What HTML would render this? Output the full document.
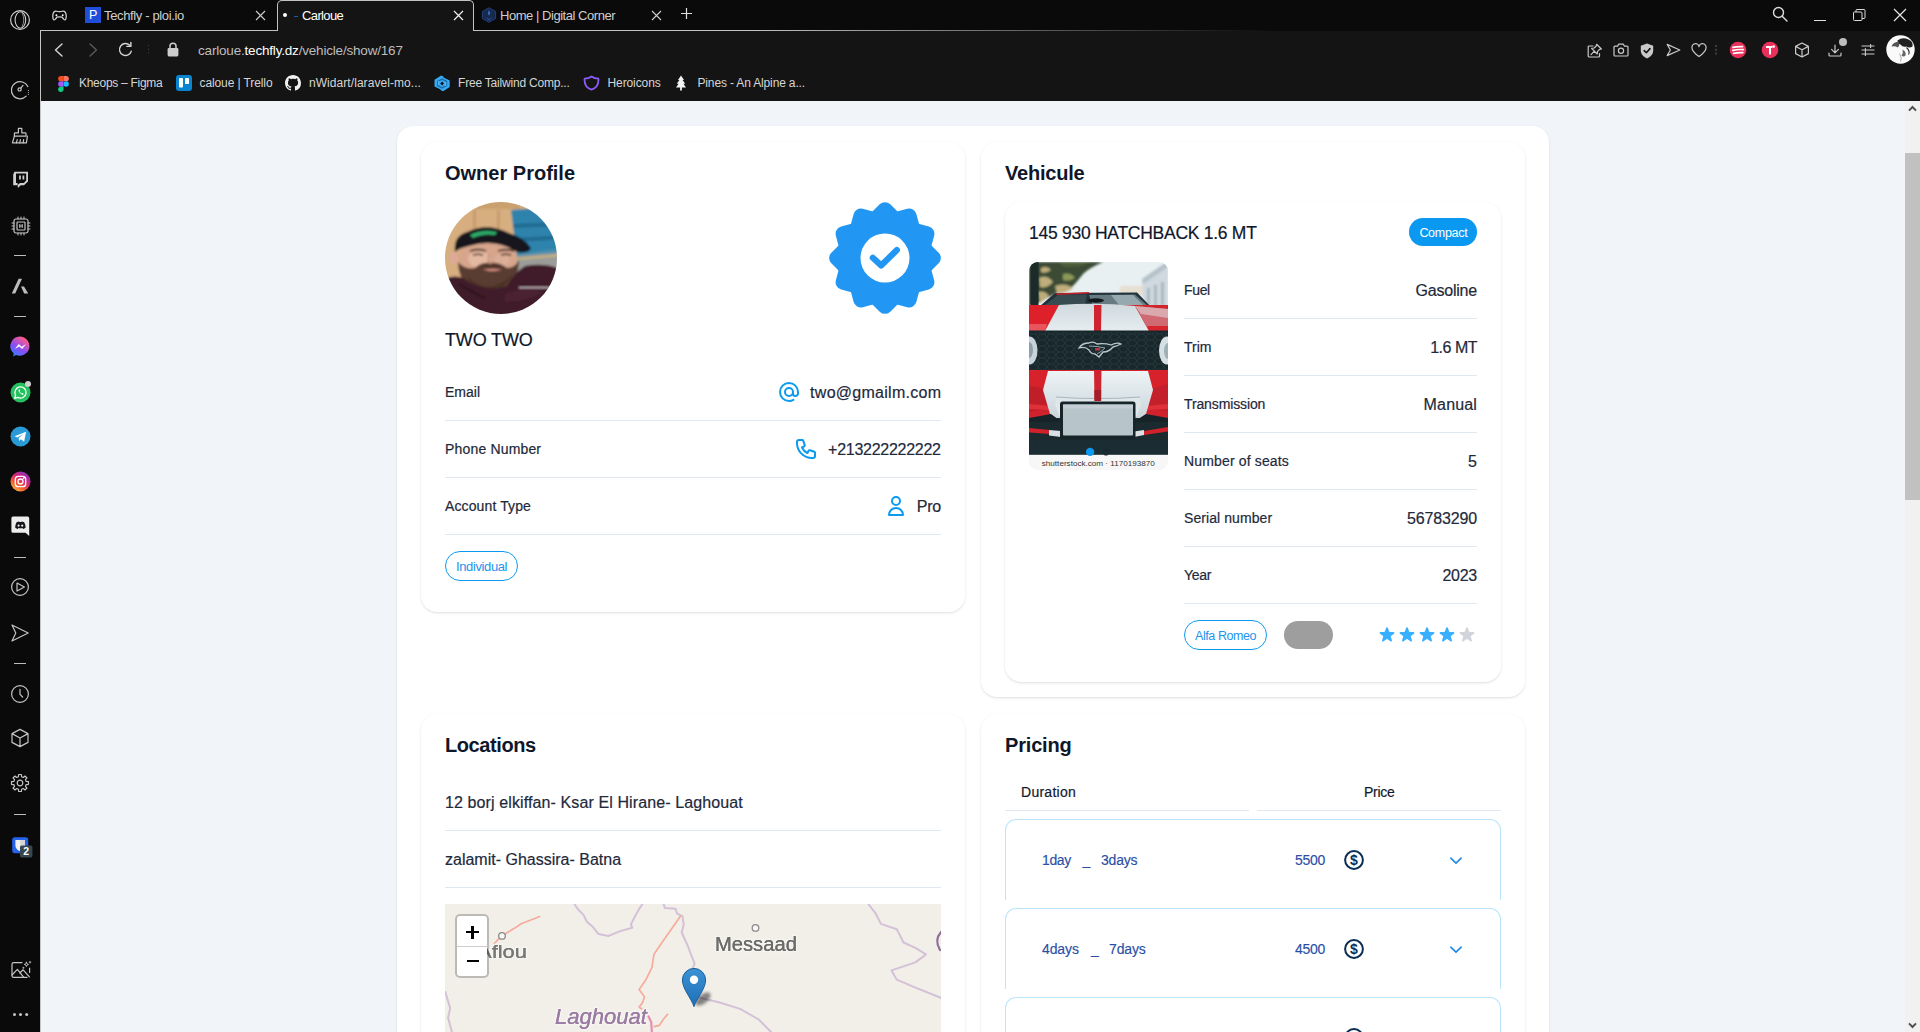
<!DOCTYPE html>
<html>
<head>
<meta charset="utf-8">
<title>Carloue</title>
<style>
*{box-sizing:border-box;margin:0;padding:0}
html,body{width:1920px;height:1032px;overflow:hidden;background:#0a0a0a;font-family:"Liberation Sans",sans-serif;}
.abs{position:absolute}
.t{position:absolute;white-space:nowrap;line-height:1}
#chrome{position:absolute;left:0;top:0;width:1920px;height:1032px;}
#toolbar{position:absolute;left:41px;top:31px;width:1879px;height:70px;background:#141414}
#page{position:absolute;left:41px;top:101px;width:1864px;height:931px;background:#f1f5f9;overflow:hidden}
#pin{position:absolute;left:-41px;top:-101px;width:1920px;height:1032px}
#sb{position:absolute;left:1905px;top:101px;width:15px;height:931px;background:#f1f1f1}
#sb .thumb{position:absolute;left:0;top:52px;width:15px;height:347px;background:#c1c1c1}
.card{position:absolute;background:#fff;border-radius:16px;box-shadow:0 1px 3px rgba(0,0,0,.1),0 1px 2px -1px rgba(0,0,0,.1)}
.h{font-weight:700;font-size:20px;color:#0f172a}
.lbl{font-size:14px;color:#1e293b;-webkit-text-stroke:.2px #1e293b}
.val{font-size:16px;color:#1e293b;-webkit-text-stroke:.2px #1e293b}
.hr{position:absolute;height:1px;background:#e2e8f0}
.pr{font-size:14px;color:#2c4fa6;-webkit-text-stroke:.15px #2c4fa6}
.bm{font-size:12px;color:#d6d6d6}
</style>
</head>
<body>
<div id="chrome">
<!-- SIDEBAR -->
<div id="sidebar" class="abs" style="left:0;top:0;width:40px;height:1032px;background:#0a0a0a">
<div class="abs" style="left:40px;top:30px;width:1px;height:1002px;background:#c6c6c6"></div>
<svg class="abs" style="left:9.0px;top:9.3px" width="22" height="22" viewBox="-11.0 -11.0 22 22" fill="none" stroke="#c4c4c4" stroke-width="1.2" stroke-linecap="round" stroke-linejoin="round"><circle r="9.4" stroke="#cdcdcd" stroke-width="1.2"/><ellipse cx=".4" rx="5.3" ry="8.2" stroke="#cdcdcd" stroke-width="1.1"/><path d="M2.4 -6.6 Q5.4 0 2.2 6.4" stroke="#9a9a9a" stroke-width=".9"/></svg>
<svg class="abs" style="left:9.600000000000001px;top:79.7px" width="20" height="20" viewBox="-10.0 -10.0 20 20" fill="none" stroke="#c4c4c4" stroke-width="1.2" stroke-linecap="round" stroke-linejoin="round"><path d="M6.2 6.2 A8.6 8.6 0 1 1 7.8 -3.4"/><circle cx="-.4" cy="-.6" r="1.6"/><path d="M.8 -1.8 L3 -4.6"/><path d="M8.4 .4 v.1 M8.4 2.4 v.1 M8.4 4.4 v.1" stroke-width="1"/></svg>
<svg class="abs" style="left:11.0px;top:126.6px" width="18" height="18" viewBox="-9.0 -9.0 18 18" fill="none" stroke="#c4c4c4" stroke-width="1.2" stroke-linecap="round" stroke-linejoin="round"><path d="M-1.6 -7.6 H1.8 V-3.2 H5.2 a.8 .8 0 0 1 .8 .8 V.2 H-5.6 V-2.4 a.8 .8 0 0 1 .8 -.8 H-1.6Z"/><path d="M-5.6 .2 L-7.6 6.8 H6.4 L7.4 .2"/><path d="M-3.6 6.8 L-2.8 3.6 M-.2 6.8 L.4 3.6 M3.2 6.8 L3.6 3.6"/></svg>
<svg class="abs" style="left:11.5px;top:171px" width="17" height="18" viewBox="0 0 17 18"><path d="M2.4 .8 H16 V10.4 L12 14.2 H8.8 L5.8 17 V14.2 H1.2 V3.6Z" fill="#cfcfcf"/><path d="M4 2.6 H14.2 V9.6 L11.8 12 H8 L5.6 14 V12 H4Z" fill="#0a0a0a"/><path d="M8 4.6 V8.4 M11.4 4.6 V8.4" stroke="#cfcfcf" stroke-width="1.7"/></svg>
<svg class="abs" style="left:11.0px;top:216.2px" width="20" height="20" viewBox="-10.0 -10.0 20 20" fill="none" stroke="#c4c4c4" stroke-width="1.2" stroke-linecap="round" stroke-linejoin="round"><rect x="-7" y="-7" width="14" height="14" rx="2"/><rect x="-4" y="-4" width="8" height="8" rx=".8"/><path d="M-1.2 -1.6 V1.6 M1.2 -1.6 V1.6 M-1.2 0 H1.2" stroke-width="1"/><path d="M-3 -7 V-9 M0 -7 V-9 M3 -7 V-9 M-3 7 V9 M0 7 V9 M3 7 V9 M-7 -3 H-9 M-7 0 H-9 M-7 3 H-9 M7 -3 H9 M7 0 H9 M7 3 H9" stroke-width="1"/></svg>
<div class="abs" style="left:14.5px;top:254.7px;width:11.8px;height:1px;background:#bdbdbd;margin-left:-.3px"></div>
<svg class="abs" style="left:11px;top:278px" width="18" height="17" viewBox="0 0 18 17"><path d="M7.6 .8 H11 L4.2 15.6 H.8Z" fill="#bdbdbd"/><path d="M10 8.4 L13 8.4 L17.2 15.6 H13.2Z" fill="#bdbdbd"/></svg>
<div class="abs" style="left:14.5px;top:315.9px;width:11.8px;height:1px;background:#bdbdbd;margin-left:-.3px"></div>
<svg class="abs" style="left:9.5px;top:336px" width="21" height="21" viewBox="-10.5 -10.5 21 21"><defs><linearGradient id="msg" x1="0" y1="1" x2=".6" y2="0"><stop offset="0" stop-color="#1e8cff"/><stop offset=".5" stop-color="#8a4cf5"/><stop offset="1" stop-color="#ff5c87"/></linearGradient></defs><path d="M0 -10 A10 9.6 0 1 1 -4.4 8.6 L-7.4 10 L-6.8 6.8 A9.6 9.6 0 0 1 0 -10Z" fill="url(#msg)"/><path d="M-5.6 2.6 L-1.8 -2.4 L1.2 .2 L5.6 -2.4 L1.8 2.6 L-1.2 0Z" fill="#fff"/></svg>
<svg class="abs" style="left:9.5px;top:382px" width="21" height="21" viewBox="-10.5 -10.5 21 21"><circle r="10" fill="#25c15e"/><path d="M-5.8 5.8 L-4.9 2.6 A5.6 5.6 0 1 1 -2.6 4.9Z" fill="none" stroke="#fff" stroke-width="1.3" stroke-linejoin="round"/><path d="M-2.2 -2.6 Q-1.6 .6 2.4 2.4 L3.2 1.2 L1.8 .4 L1.2 1 Q-.4 .2 -.9 -1.2 L-.3 -1.8 L-1 -3.2Z" fill="#fff"/></svg>
<div class="abs" style="left:24.6px;top:380.8px;width:6.4px;height:6.4px;border-radius:4px;background:#cfcfcf"></div>
<svg class="abs" style="left:9.5px;top:426px" width="21" height="21" viewBox="-10.5 -10.5 21 21"><circle r="10" fill="#2a9ad6"/><path d="M-6 -.2 L5.6 -4.8 L3.6 5.2 L.4 2.8 L-1.4 4.6 L-1.8 1.6 L3.2 -2.8 L-3 .9Z" fill="#fff"/></svg>
<svg class="abs" style="left:9.5px;top:471px" width="21" height="21" viewBox="-10.5 -10.5 21 21"><defs><linearGradient id="ig" x1=".15" y1="1" x2=".85" y2="0"><stop offset="0" stop-color="#fdc94f"/><stop offset=".3" stop-color="#f4622c"/><stop offset=".6" stop-color="#d6247c"/><stop offset="1" stop-color="#7c36c8"/></linearGradient></defs><circle r="10" fill="url(#ig)"/><rect x="-5.2" y="-5.2" width="10.4" height="10.4" rx="3" fill="none" stroke="#fff" stroke-width="1.3"/><circle r="2.5" fill="none" stroke="#fff" stroke-width="1.3"/><circle cx="3.1" cy="-3.1" r=".8" fill="#fff"/></svg>
<svg class="abs" style="left:10.5px;top:516px" width="20" height="21" viewBox="0 0 20 21"><path d="M2 .6 H16.6 a1.6 1.6 0 0 1 1.6 1.6 V20 L14.6 16.8 H2 a1.6 1.6 0 0 1 -1.6 -1.6 V2.2 A1.6 1.6 0 0 1 2 .6Z" fill="#ececec"/><path d="M5.6 6.2 Q7.2 5.4 8 5.4 L8.4 6 H10.4 L10.8 5.4 Q11.6 5.4 13.2 6.2 Q14.8 9 14.6 11.8 Q13.4 12.8 12 13 L11.4 12 Q9.4 12.6 7.4 12 L6.8 13 Q5.4 12.8 4.2 11.8 Q4 9 5.6 6.2Z" fill="#15151a"/><ellipse cx="7.6" cy="9.6" rx="1" ry="1.2" fill="#ececec"/><ellipse cx="11.2" cy="9.6" rx="1" ry="1.2" fill="#ececec"/></svg>
<div class="abs" style="left:14.5px;top:556.8px;width:11.8px;height:1px;background:#bdbdbd;margin-left:-.3px"></div>
<svg class="abs" style="left:9.600000000000001px;top:577.2px" width="20" height="20" viewBox="-10.0 -10.0 20 20" fill="none" stroke="#c4c4c4" stroke-width="1.2" stroke-linecap="round" stroke-linejoin="round"><circle r="8.4"/><path d="M-3 -4 L4.4 0 L-3 4Z"/></svg>
<svg class="abs" style="left:9.600000000000001px;top:623.0px" width="20" height="20" viewBox="-10.0 -10.0 20 20" fill="none" stroke="#c4c4c4" stroke-width="1.2" stroke-linecap="round" stroke-linejoin="round"><path d="M-8 -8 L8.2 0 L-8 8 L-4.2 0Z"/></svg>
<div class="abs" style="left:14.5px;top:662.8px;width:11.8px;height:1px;background:#bdbdbd;margin-left:-.3px"></div>
<svg class="abs" style="left:9.600000000000001px;top:683.5px" width="20" height="20" viewBox="-10.0 -10.0 20 20" fill="none" stroke="#c4c4c4" stroke-width="1.2" stroke-linecap="round" stroke-linejoin="round"><circle r="8.4"/><path d="M0 -4.6 V.4 L2.6 3"/></svg>
<svg class="abs" style="left:9.600000000000001px;top:728.1px" width="20" height="20" viewBox="-10.0 -10.0 20 20" fill="none" stroke="#c4c4c4" stroke-width="1.2" stroke-linecap="round" stroke-linejoin="round"><path d="M0 -8.6 L8 -4.4 V4.4 L0 8.6 L-8 4.4 V-4.4Z M-8 -4.4 L0 0 L8 -4.4 M0 0 V8.6"/></svg>
<svg class="abs" style="left:9.600000000000001px;top:773.4px" width="20" height="20" viewBox="-10.0 -10.0 20 20" fill="none" stroke="#c4c4c4" stroke-width="1.2" stroke-linecap="round" stroke-linejoin="round"><path d="M8.49 -1.37 L8.49 1.37 L6.2 1.58 L5.5 3.27 L6.97 5.03 L5.03 6.97 L3.27 5.5 L1.58 6.2 L1.37 8.49 L-1.37 8.49 L-1.58 6.2 L-3.27 5.5 L-5.03 6.97 L-6.97 5.03 L-5.5 3.27 L-6.2 1.58 L-8.49 1.37 L-8.49 -1.37 L-6.2 -1.58 L-5.5 -3.27 L-6.97 -5.03 L-5.03 -6.97 L-3.27 -5.5 L-1.58 -6.2 L-1.37 -8.49 L1.37 -8.49 L1.58 -6.2 L3.27 -5.5 L5.03 -6.97 L6.97 -5.03 L5.5 -3.27 L6.2 -1.58Z"/><circle r="2.8"/></svg>
<div class="abs" style="left:14.5px;top:813.9px;width:11.8px;height:1px;background:#bdbdbd;margin-left:-.3px"></div>
<svg class="abs" style="left:12px;top:836.5px" width="21" height="21" viewBox="0 0 21 21"><rect x=".2" y=".2" width="16" height="16" rx="2.6" fill="#2563eb"/><path d="M3.4 3 H13 V8.4 C13 11.4 10.6 13.2 8.2 14.2 C5.8 13.2 3.4 11.4 3.4 8.4Z" fill="#f2f2f2"/><path d="M8.2 3 H13 V8.4 C13 11.4 10.6 13.2 8.2 14.2Z" fill="#d6d6d6"/><rect x="8" y="8.4" width="12.4" height="12" rx="1.6" fill="#37474f"/><text x="14.2" y="18.3" text-anchor="middle" font-family="Liberation Sans, sans-serif" font-weight="700" font-size="10.5" fill="#fff">2</text></svg>
<svg class="abs" style="left:9.600000000000001px;top:960.1px" width="22" height="20" viewBox="-11.0 -10.0 22 20" fill="none" stroke="#c4c4c4" stroke-width="1.2" stroke-linecap="round" stroke-linejoin="round"><path d="M1 -7.4 H-7.4 a1.6 1.6 0 0 0 -1.6 1.6 V5.8 a1.6 1.6 0 0 0 1.6 1.6 H6"/><path d="M-9 5 L-3.6 -.6 L2.6 7.2 M-1.2 3 L2.2 -.2 L8.4 6.8"/><path d="M8.6 -2 V2.4" /><path d="M5.4 -7.8 L6 -6.2 L7.6 -5.6 L6 -5 L5.4 -3.4 L4.8 -5 L3.2 -5.6 L4.8 -6.2Z" stroke-width=".9"/><path d="M9 -8.6 v1.6 M8.2 -7.8 h1.6 M2.4 -2.8 v1.2 M1.8 -2.2 h1.2" stroke-width=".8"/></svg>
<div class="abs" style="left:12.7px;top:1012.6px;width:3.4px;height:3.4px;border-radius:2px;background:#c4c4c4;box-shadow:6px 0 0 #c4c4c4,12.2px 0 0 #c4c4c4"></div>
</div>
<!-- TABBAR -->
<div id="tabbar" class="abs" style="left:40px;top:0;width:1880px;height:31px;background:#0a0a0a">
  <!-- frame line under tabs -->
  <div class="abs" style="left:0;top:30px;width:238px;height:1px;background:#c2c2c2"></div>
  <div class="abs" style="left:433px;top:30px;width:800px;height:1px;background:linear-gradient(90deg,#c2c2c2 0,#c2c2c2 35%,rgba(194,194,194,0) 100%)"></div>
  <!-- active tab -->
  <div class="abs" style="left:237px;top:0;width:197px;height:32px;background:#141414;border:1px solid #c2c2c2;border-bottom:none;border-radius:5px 5px 0 0"></div>
  <!-- gamepad -->
  <svg class="abs" style="left:11.5px;top:9.6px" width="15" height="11" viewBox="-.5 0 15 11" fill="none" stroke="#d4d4d4" stroke-width="1.25" stroke-linejoin="round"><path d="M3.2 1 Q7 2.2 10.8 1 C13 1 14 4 13.6 8 C13.4 10.2 11.8 10.2 11 9 L9.6 7.2 Q7 6.4 4.4 7.2 L3 9 C2.2 10.2 .6 10.2 .4 8 C0 4 1 1 3.2 1Z"/><circle cx="3.9" cy="5.2" r=".95" fill="#fff" stroke="none"/><circle cx="10.2" cy="5.2" r=".95" fill="#fff" stroke="none"/></svg>
  <!-- tab1 -->
  <div class="abs" style="left:45px;top:7px;width:16px;height:16px;background:#1f4fd8"></div>
  <div class="t" style="left:49px;top:9px;font-size:12.5px;color:#fff;font-weight:400">P</div>
  <div class="t" id="t_tab1" style="left:64px;top:9px;font-size:13px;color:#cfcfcf;letter-spacing:-.36px">Techfly - ploi.io</div>
  <svg class="abs" style="left:215px;top:10px" width="11" height="11" viewBox="0 0 11 11"><path d="M1 1 L10 10 M10 1 L1 10" stroke="#cfcfcf" stroke-width="1.1"/></svg>
  <!-- tab2 active -->
  <div class="abs" style="left:243px;top:13px;width:4px;height:4px;border-radius:2px;background:#fff"></div>
  <div class="abs" style="left:254px;top:15.5px;width:4px;height:1px;background:#1d5fa8"></div>
  <div class="t" id="t_tab2" style="left:262px;top:9px;font-size:13px;color:#fff;letter-spacing:-.62px">Carloue</div>
  <svg class="abs" style="left:413px;top:10px" width="11" height="11" viewBox="0 0 11 11"><path d="M1 1 L10 10 M10 1 L1 10" stroke="#f0f0f0" stroke-width="1.2"/></svg>
  <!-- tab3 -->
  <svg class="abs" style="left:441px;top:7px" width="16" height="16" viewBox="0 0 16 16"><path d="M8 .8 L14.6 4.4 V11.6 L8 15.2 L1.4 11.6 V4.4Z" fill="#16294f" stroke="#22407c" stroke-width="1"/><path d="M8 3.5 C6.5 5 6.3 7 8 8.5 C9.7 7 9.5 5 8 3.5Z" fill="#3b68b8"/><path d="M4 10 L8 12 L12 10 L8 13.5Z" fill="#2a4f96"/></svg>
  <div class="t" id="t_tab3" style="left:460px;top:9px;font-size:13px;color:#cfcfcf;letter-spacing:-.46px">Home | Digital Corner</div>
  <svg class="abs" style="left:611px;top:10px" width="11" height="11" viewBox="0 0 11 11"><path d="M1 1 L10 10 M10 1 L1 10" stroke="#cfcfcf" stroke-width="1.1"/></svg>
  <svg class="abs" style="left:640px;top:7px" width="13" height="13" viewBox="0 0 13 13"><path d="M6.5 1 V12 M1 6.5 H12" stroke="#e0e0e0" stroke-width="1.2"/></svg>
  <!-- window controls -->
  <svg class="abs" style="left:1731px;top:5px" width="18" height="18" viewBox="0 0 18 18" fill="none" stroke="#dcdcdc" stroke-width="1.4"><circle cx="7.5" cy="7.5" r="5"/><path d="M11.2 11.2 L16 16" stroke-linecap="round"/></svg>
  <div class="abs" style="left:1774px;top:20px;width:12px;height:1px;background:#dcdcdc"></div>
  <svg class="abs" style="left:1813px;top:9px" width="13" height="13" viewBox="0 0 13 13" fill="none" stroke="#dcdcdc" stroke-width="1"><rect x=".5" y="3" width="8.5" height="8.5" rx="1"/><path d="M3 3 V1.5 a1 1 0 0 1 1 -1 H11 a1 1 0 0 1 1 1 V8.5 a1 1 0 0 1 -1 1 H9"/></svg>
  <svg class="abs" style="left:1853px;top:8px" width="14" height="14" viewBox="0 0 14 14"><path d="M1 1 L13 13 M13 1 L1 13" stroke="#e6e6e6" stroke-width="1.2"/></svg>
</div>
<!-- TOOLBAR -->
<div id="toolbar">
<svg class="abs" style="left:13px;top:12px" width="10" height="14" viewBox="0 0 10 14" fill="none" stroke="#c9c9c9" stroke-width="1.2" stroke-linecap="round" stroke-linejoin="round" ><path d="M8 1 L1.5 7 L8 13" stroke="#d6d6d6" stroke-width="1.4"/></svg>
<svg class="abs" style="left:47px;top:12px" width="10" height="14" viewBox="0 0 10 14" fill="none" stroke="#c9c9c9" stroke-width="1.2" stroke-linecap="round" stroke-linejoin="round" ><path d="M2 1 L8.5 7 L2 13" stroke="#5a5a5a" stroke-width="1.4"/></svg>
<svg class="abs" style="left:76px;top:10px" width="17" height="17" viewBox="0 0 17 17" fill="none" stroke="#c9c9c9" stroke-width="1.2" stroke-linecap="round" stroke-linejoin="round" ><path d="M14.3 10.1 A6 6 0 1 1 12.7 4.2" stroke="#d6d6d6" stroke-width="1.4"/><path d="M13.9 1.4 V5.4 H9.9" stroke="#d6d6d6" stroke-width="1.4" fill="none"/></svg>
<div class="abs" style="left:106.5px;top:14px;width:1.4px;height:1.4px;background:#444;box-shadow:0 3.6px 0 #444,0 7.2px 0 #444"></div>
<svg class="abs" style="left:126px;top:11px" width="12" height="15" viewBox="0 0 12 15"><rect x=".6" y="6" width="10.8" height="8.4" rx="1.3" fill="#cdcdcd"/><path d="M3 6.2 V4.2 a3 3 0 0 1 6 0 V6.2" fill="none" stroke="#cdcdcd" stroke-width="1.5"/></svg>
<div class="t" id="t_url" style="left:157px;top:12.5px;font-size:13.5px;color:#bdbdbd;letter-spacing:-0.19px">carloue.<span style="color:#fff">techfly.dz</span>/vehicle/show/167</div>
<svg class="abs" style="left:1546.0px;top:11.5px" width="16" height="15" viewBox="0 0 16 15" fill="none" stroke="#c9c9c9" stroke-width="1.2" stroke-linecap="round" stroke-linejoin="round" ><path d="M6 3 H2.2 a1 1 0 0 0 -1 1 V13 a1 1 0 0 0 1 1 H11.5 a1 1 0 0 0 1 -1 V10.5"/><path d="M9.6 1.3 L14.4 6 L12.6 6.4 L10.6 8.4 L10.2 11 L4.6 5.4 L7.2 5 L9.2 3Z M7.4 8.2 L4 11.6"/></svg>
<svg class="abs" style="left:1572.0px;top:11.5px" width="16" height="14" viewBox="0 0 16 14" fill="none" stroke="#c9c9c9" stroke-width="1.2" stroke-linecap="round" stroke-linejoin="round" ><path d="M1 4.2 a1 1 0 0 1 1 -1 H4.6 L5.6 1.2 H10.4 L11.4 3.2 H14 a1 1 0 0 1 1 1 V12 a1 1 0 0 1 -1 1 H2 a1 1 0 0 1 -1 -1Z"/><circle cx="8" cy="7.8" r="2.6"/></svg>
<svg class="abs" style="left:1599.0px;top:11.5px" width="14" height="16" viewBox="0 0 14 16"><path d="M7 .6 L13.2 2.8 V7.6 C13.2 11.4 10.6 14 7 15.4 C3.4 14 .8 11.4 .8 7.6 V2.8Z" fill="#c9c9c9"/><path d="M4.2 7.6 L6.3 9.7 L10 5.6" fill="none" stroke="#141414" stroke-width="1.6" stroke-linecap="round" stroke-linejoin="round"/></svg>
<svg class="abs" style="left:1625.0px;top:12px" width="15" height="14" viewBox="0 0 15 14" fill="none" stroke="#c9c9c9" stroke-width="1.2" stroke-linecap="round" stroke-linejoin="round" ><path d="M1.2 1.4 L13.8 7 L1.2 12.6 L4.4 7Z"/></svg>
<svg class="abs" style="left:1650.0px;top:12px" width="16" height="15" viewBox="0 0 16 15" fill="none" stroke="#c9c9c9" stroke-width="1.2" stroke-linecap="round" stroke-linejoin="round" ><path d="M8 13.6 C3 9.8 1 7.4 1 4.9 A3.4 3.4 0 0 1 8 3.6 A3.4 3.4 0 0 1 15 4.9 C15 7.4 13 9.8 8 13.6Z"/></svg>
<div class="abs" style="left:1674.3px;top:14.399999999999999px;width:1.4px;height:1.4px;background:#3c3c3c;box-shadow:0 3.8px 0 #3c3c3c,0 7.6px 0 #3c3c3c"></div>
<svg class="abs" style="left:1687.7px;top:9.700000000000003px" width="18" height="18" viewBox="-9 -9 18 18"><circle r="8.3" fill="#e8305a"/><path d="M-5 -2.6 Q-1 -3.6 4.6 -3.4 M-5.2 .4 Q0 -.8 5.4 -.4 M-4.4 3.4 Q0 2.4 4.8 2.6" stroke="#fff" stroke-width="1.7" fill="none" stroke-linecap="round"/></svg>
<svg class="abs" style="left:1720px;top:9.700000000000003px" width="18" height="18" viewBox="-9 -9 18 18"><circle r="8.3" fill="#e8305a"/><path d="M-4 -3 H2.4 M0 -3 V4.6" stroke="#fff" stroke-width="2" fill="none"/><circle cx="3.6" cy="-3.4" r="1.3" fill="#fff"/></svg>
<svg class="abs" style="left:1752.5px;top:11px" width="16" height="16" viewBox="0 0 16 16" fill="none" stroke="#c9c9c9" stroke-width="1.2" stroke-linecap="round" stroke-linejoin="round" ><path d="M8 1 L14.4 4.4 V11.6 L8 15 L1.6 11.6 V4.4Z M1.6 4.4 L8 7.8 L14.4 4.4 M8 7.8 V15"/></svg>
<svg class="abs" style="left:1786.6px;top:13px" width="14" height="13" viewBox="0 0 14 13" fill="none" stroke="#c9c9c9" stroke-width="1.2" stroke-linecap="round" stroke-linejoin="round" ><path d="M7 1 V8.6 M3.6 5.4 L7 8.8 L10.4 5.4 M1 9 V11 a1 1 0 0 0 1 1 H12 a1 1 0 0 0 1 -1 V9"/></svg>
<div class="abs" style="left:1797.9px;top:7px;width:8px;height:8px;border-radius:4px;background:#bdbdbd"></div>
<svg class="abs" style="left:1819.8px;top:13px" width="14" height="12" viewBox="0 0 14 12" fill="none" stroke="#c9c9c9" stroke-width="1.2" stroke-linecap="round" stroke-linejoin="round" ><path d="M1 2 H13 M1 6 H13 M1 10 H13 M9.6 .6 V3.4 M4.4 4.6 V7.4 M4.4 8.6 V11.4"/></svg>
<svg class="abs" style="left:1845.3px;top:4.200000000000003px" width="29" height="29" viewBox="-14.5 -14.5 29 29"><defs><clipPath id="pav"><circle r="14.2"/></clipPath></defs><circle r="14.2" fill="#fafafa"/><g clip-path="url(#pav)"><path d="M-3 -9 Q2 -13 8 -10 Q13 -8 12 -3 Q9 -1 6 -3 Q2 -2 0 -5 Q-3 -6 -3 -9Z" fill="#222"/><path d="M-2 -8 Q-8 -7 -9 -3 Q-5 -4 -3 -2 Q0 -4 -2 -8Z" fill="#555"/><path d="M2 0 Q6 2 5 6 Q3 8 1 6 Q3 3 2 0Z" fill="#666"/><path d="M6 -2 Q10 2 8 5" stroke="#333" stroke-width="1.2" fill="none"/><path d="M-1 4 Q2 9 0 12" stroke="#999" stroke-width=".8" fill="none"/></g></svg>
<svg class="abs" style="left:16.5px;top:44.5px" width="11" height="16" viewBox="0 0 10 15"><path d="M2.5 0 H5 V5 H2.5 a2.5 2.5 0 0 1 0 -5Z" fill="#f24e1e"/><path d="M5 0 H7.5 a2.5 2.5 0 0 1 0 5 H5Z" fill="#ff7262"/><path d="M2.5 5 H5 V10 H2.5 a2.5 2.5 0 0 1 0 -5Z" fill="#a259ff"/><circle cx="7.5" cy="7.5" r="2.5" fill="#1abcfe"/><path d="M2.5 10 H5 V12.5 a2.5 2.5 0 1 1 -2.5 -2.5Z" fill="#0acf83"/></svg>
<div class="t bm" id="t_b1" style="left:38px;top:45.5px;letter-spacing:-0.28px">Kheops – Figma</div>
<svg class="abs" style="left:135px;top:44px" width="16" height="16" viewBox="0 0 16 16"><rect width="16" height="16" rx="3" fill="#0a84d0"/><rect x="3" y="3" width="4" height="9.5" rx=".8" fill="#fff"/><rect x="9" y="3" width="4" height="6" rx=".8" fill="#fff"/></svg>
<div class="t bm" id="t_b2" style="left:158.5px;top:45.5px;letter-spacing:-0.1px">caloue | Trello</div>
<svg class="abs" style="left:244px;top:44px" width="16" height="16" viewBox="0 0 16 16"><path fill="#f2f2f2" d="M8 0C3.58 0 0 3.58 0 8c0 3.54 2.29 6.53 5.47 7.59.4.07.55-.17.55-.38 0-.19-.01-.82-.01-1.49-2.01.37-2.53-.49-2.69-.94-.09-.23-.48-.94-.82-1.13-.28-.15-.68-.52-.01-.53.63-.01 1.08.58 1.23.82.72 1.21 1.87.87 2.33.66.07-.52.28-.87.51-1.07-1.78-.2-3.64-.89-3.64-3.95 0-.87.31-1.59.82-2.15-.08-.2-.36-1.02.08-2.12 0 0 .67-.21 2.2.82.64-.18 1.32-.27 2-.27.68 0 1.36.09 2 .27 1.53-1.04 2.2-.82 2.2-.82.44 1.1.16 1.92.08 2.12.51.56.82 1.27.82 2.15 0 3.07-1.87 3.75-3.65 3.95.29.25.54.73.54 1.48 0 1.07-.01 1.93-.01 2.2 0 .21.15.46.55.38A8.013 8.013 0 0016 8c0-4.42-3.58-8-8-8z"/></svg>
<div class="t bm" id="t_b3" style="left:268px;top:45.5px;letter-spacing:0.06px">nWidart/laravel-mo...</div>
<svg class="abs" style="left:392.2px;top:43.6px" width="18.4" height="17" viewBox="0 0 17 17" preserveAspectRatio="none"><path d="M7.6 .6 L9.6 1.6 L9.8 2.4 L15.4 5.4 V12 L9.4 16.2 L7.2 15.2 L7 14.4 L1.4 11.4 V4.8Z" fill="#37a9f7"/><path d="M8.4 4.2 L12.4 6.4 V10.6 L8.4 12.8 L4.4 10.6 V6.4Z" fill="none" stroke="#1f6ea6" stroke-width="1.5"/><path d="M8.4 6.6 L10.2 8.4 L8.4 10.4 L6.6 8.6Z" fill="#141414"/><path d="M5.2 6 L5.2 10 M11.6 7 V11" stroke="#46b6ff" stroke-width="1.2"/></svg>
<div class="t bm" id="t_b4" style="left:417px;top:45.5px;letter-spacing:-0.2px">Free Tailwind Comp...</div>
<svg class="abs" style="left:542px;top:44px" width="17" height="16" viewBox="0 0 17 16" fill="none"><path d="M8.5 1.5 C6.5 3 4 3.6 1.6 3.6 C1.2 8.6 3.4 12.8 8.5 14.6 C13.6 12.8 15.8 8.6 15.4 3.6 C13 3.6 10.5 3 8.5 1.5Z" stroke="#8b5cf6" stroke-width="1.8" stroke-linejoin="round"/></svg>
<div class="t bm" id="t_b5" style="left:566.5px;top:45.5px;letter-spacing:-0.1px">Heroicons</div>
<svg class="abs" style="left:634px;top:44px" width="12" height="16" viewBox="0 0 12 16"><path d="M6 .6 L9 5 H7.6 L10.2 8.8 H8.4 L11 12.6 H6.9 V15.4 H5.1 V12.6 H1 L3.6 8.8 H1.8 L4.4 5 H3Z" fill="#f4f4f4"/></svg>
<div class="t bm" id="t_b6" style="left:656.5px;top:45.5px;letter-spacing:-0.15px">Pines - An Alpine a...</div>
</div>
<!-- PAGE -->
<div id="page"><div id="pin">
  <div class="card" id="outer" style="left:397px;top:126px;width:1151.6px;height:1000px;border-radius:16px;box-shadow:0 1px 3px rgba(0,0,0,.1),0 1px 2px -1px rgba(0,0,0,.1)"></div>
  <div class="card" id="owner" style="left:421px;top:142px;width:544px;height:470px"></div>
  <div class="card" id="veh" style="left:981px;top:142px;width:544px;height:555px"></div>
  <div class="card" id="vehin" style="left:1005px;top:202px;width:496px;height:480px"></div>

  <!-- OWNER CONTENT -->
  <div class="t h" id="t_owner" style="left:445px;top:163px">Owner Profile</div>
  <svg class="abs" id="avatar" style="left:445px;top:202px" width="112" height="112" viewBox="0 0 112 112">
    <defs><clipPath id="avc"><circle cx="56" cy="56" r="56"/></clipPath><filter id="avb" x="-10%" y="-10%" width="120%" height="120%"><feGaussianBlur stdDeviation="1.1"/></filter></defs>
    <g clip-path="url(#avc)"><g filter="url(#avb)">
      <rect x="-5" y="-5" width="122" height="122" fill="#d6ae80"/>
      <rect x="-5" y="-5" width="80" height="12" fill="#caa06e"/>
      <rect x="28" y="8" width="3" height="30" fill="#c79c6c"/>
      <rect x="52" y="8" width="3" height="30" fill="#c79c6c"/>
      <polygon points="66,8 118,4 118,52 72,55" fill="#2f83ad"/>
      <polygon points="68,22 118,20 118,24 68,26" fill="#236b90"/>
      <polygon points="70,36 118,33 118,37 70,40" fill="#236b90"/>
      <polygon points="72,52 118,46 118,60 72,62" fill="#4a8fae"/>
      <polygon points="72,54 118,50 118,70 72,70" fill="#9b9c9a"/>
      <polygon points="72,56 118,52 118,54 72,58" fill="#c9b37a"/>
      <ellipse cx="43" cy="58" rx="29" ry="30" fill="#d6a58c"/>
      <ellipse cx="34" cy="57" rx="11" ry="8" fill="#e4b9a2"/>
      <ellipse cx="57" cy="58" rx="8" ry="6" fill="#dcae98"/>
      <ellipse cx="9" cy="56" rx="4" ry="6" fill="#e0a898"/>
      <path d="M13 60 Q14 90 44 90 Q73 90 74 58 Q70 66 62 66 Q54 60 46 61 Q36 60 30 66 Q20 68 13 60Z" fill="#5a3d30"/>
      <path d="M22 74 Q44 96 68 72 Q60 88 44 88 Q28 88 22 74Z" fill="#4a3026"/>
      <path d="M34 65 Q46 60 60 65 Q47 66 34 65Z" fill="#4e342a"/>
      <path d="M38 67.5 Q47 66 57 67.5 Q47 71 38 67.5Z" fill="#d08a80"/>
      <path d="M25 49 Q33 46.5 41 49 M53 49 Q61 46.5 69 49" stroke="#4a2e26" stroke-width="1.8" fill="none"/>
      <path d="M28 53 Q33 51.5 38 53 M56 53 Q61 51.5 66 53" stroke="#3a2620" stroke-width="1.5" fill="none"/>
      <path d="M44 52 Q42 60 46 62" stroke="#c48f78" stroke-width="1.5" fill="none"/>
      <path d="M10 50 Q8 34 22 30 Q42 20 64 31 Q80 36 86 46 Q84 52 72 50 Q50 36 24 44 Q14 46 10 50Z" fill="#15151a"/>
      <path d="M25 33 Q36 27 52 30 L50 33 Q38 31 28 36Z" fill="#2fae6a"/>
      <path d="M-5 78 Q10 72 18 76 Q40 92 62 84 Q70 70 80 64 Q100 60 118 68 L118 118 L-5 118Z" fill="#3f1c29"/>
      <path d="M14 82 Q30 92 40 96" stroke="#2a1019" stroke-width="2" fill="none"/>
      <rect x="74" y="85.2" width="30" height="1" fill="#f4eeee"/><path d="M60 92 Q80 84 100 90 Q80 100 60 100Z" fill="#552636" opacity=".6"/>
    </g></g>
  </svg>
  <svg class="abs" id="badge" style="left:825px;top:198px" width="120" height="120" viewBox="-60 -60 120 120">
    <g fill="#2196f3">
      <rect x="-41.7" y="-41.7" width="83.4" height="83.4" rx="7.5" transform="rotate(45)"/>
      <rect x="-41.7" y="-41.7" width="83.4" height="83.4" rx="7.5" transform="rotate(75)"/>
      <rect x="-41.7" y="-41.7" width="83.4" height="83.4" rx="7.5" transform="rotate(15)"/>
    </g>
    <circle cx="0" cy="0" r="24.5" fill="#fff"/>
    <path d="M-12.2 -0.2 L-3.9 7.4 L11.9 -7.9" fill="none" stroke="#2196f3" stroke-width="6.2" stroke-linecap="round" stroke-linejoin="round"/>
  </svg>
  <div class="t" id="t_two" style="left:445px;top:331px;font-size:18px;color:#0f172a;-webkit-text-stroke:.2px #0f172a;letter-spacing:-.15px">TWO TWO</div>

  <div class="t lbl" id="t_email" style="left:445px;top:385px">Email</div>
  <svg class="abs ic" style="left:777px;top:380px" width="24" height="24" viewBox="0 0 24 24" fill="none" stroke="#0c9af0" stroke-width="2" stroke-linecap="round" stroke-linejoin="round"><path d="M16 12a4 4 0 10-8 0 4 4 0 008 0zm0 0v1.5a2.5 2.5 0 005 0V12a9 9 0 10-9 9m4.5-1.206a8.959 8.959 0 01-4.5 1.207"/></svg>
  <div class="t val" id="t_mail" style="right:979px;top:385px;letter-spacing:.27px;margin-right:-.27px">two@gmailm.com</div>
  <div class="hr" style="left:445px;top:420px;width:496px"></div>

  <div class="t lbl" id="t_phone" style="left:445px;top:442px;letter-spacing:.17px">Phone Number</div>
  <svg class="abs ic" style="left:794px;top:437px" width="24" height="24" viewBox="0 0 24 24" fill="none" stroke="#0c9af0" stroke-width="2" stroke-linecap="round" stroke-linejoin="round"><path d="M3 5a2 2 0 012-2h3.28a1 1 0 01.948.684l1.498 4.493a1 1 0 01-.502 1.21l-2.257 1.13a11.042 11.042 0 005.516 5.516l1.13-2.257a1 1 0 011.21-.502l4.493 1.498a1 1 0 01.684.949V19a2 2 0 01-2 2h-1C9.716 21 3 14.284 3 6V5z"/></svg>
  <div class="t val" id="t_num" style="right:979px;top:442px;letter-spacing:-.27px;margin-right:.27px">+213222222222</div>
  <div class="hr" style="left:445px;top:477px;width:496px"></div>

  <div class="t lbl" id="t_acct" style="left:445px;top:499px;letter-spacing:.12px">Account Type</div>
  <svg class="abs ic" style="left:884px;top:494px" width="24" height="24" viewBox="0 0 24 24" fill="none" stroke="#0c9af0" stroke-width="2" stroke-linecap="round" stroke-linejoin="round"><path d="M16 7a4 4 0 11-8 0 4 4 0 018 0zM12 14a7 7 0 00-7 7h14a7 7 0 00-7-7z"/></svg>
  <div class="t val" id="t_pro" style="right:979px;top:499px;letter-spacing:-.2px">Pro</div>
  <div class="hr" style="left:445px;top:534px;width:496px"></div>

  <div class="abs pill" style="left:445px;top:551px;width:73px;height:30px;border:1px solid #0c9af0;border-radius:15px"></div>
  <div class="t" id="t_indiv" style="left:456px;top:560.4px;font-size:13px;color:#1d93ee;letter-spacing:-.38px">Individual</div>


  <!-- VEHICLE CONTENT -->
  <div class="t h" id="t_veh" style="left:1005px;top:163px;letter-spacing:-.22px">Vehicule</div>
  <div class="t" id="t_model" style="left:1029px;top:224.6px;font-size:18px;color:#0f172a;-webkit-text-stroke:.2px #0f172a;font-size:17.5px;letter-spacing:-.27px">145 930 HATCHBACK 1.6 MT</div>
  <div class="abs" style="left:1409px;top:218px;width:68px;height:28px;border-radius:14px;background:#0b98f0"></div>
  <div class="t" id="t_compact" style="left:1419.4px;top:226.9px;font-size:13px;color:#fff;font-size:12.5px;letter-spacing:-.3px">Compact</div>
<div class="abs" id="car" style="left:1029px;top:262px;width:139px;height:208px;border-radius:9px;overflow:hidden;background:#f6f6f6">
  <svg width="139" height="208" viewBox="0 0 139 208" style="position:absolute;left:0;top:0">
    <defs>
      <filter id="cb1" x="-10%" y="-10%" width="120%" height="120%"><feGaussianBlur stdDeviation="1.2"/></filter>
      <filter id="cb0" x="-5%" y="-5%" width="110%" height="110%"><feGaussianBlur stdDeviation=".5"/></filter>
      <pattern id="hex" width="9" height="6" patternUnits="userSpaceOnUse"><path d="M0 3 L2 0 L6.5 0 L9 3 L6.5 6 L2 6Z" fill="none" stroke="#2b3d42" stroke-width=".7"/></pattern>
      <linearGradient id="hoodw" x1="0" y1="0" x2="0" y2="1"><stop offset="0" stop-color="#cfd9de"/><stop offset="1" stop-color="#e6edf0"/></linearGradient>
      <linearGradient id="bumpw" x1="0" y1="0" x2="0" y2="1"><stop offset="0" stop-color="#eef3f5"/><stop offset=".5" stop-color="#dbe4e8"/><stop offset="1" stop-color="#c9d4d9"/></linearGradient>
    </defs>
    <rect width="139" height="50" fill="#e9f0f2"/>
    <g filter="url(#cb1)">
      <path d="M0 0 L74 0 Q60 6 54 12 Q48 20 42 26 L30 30 L10 40 L0 44Z" fill="#3a4c34"/>
      <path d="M30 0 L60 0 Q50 6 44 4 Q36 8 30 0Z" fill="#4d5f3a"/>
      <path d="M10 16 Q18 12 24 20 Q18 27 11 25Z M26 24 Q36 20 44 26 Q36 32 28 31Z M9 30 Q16 28 20 34 L11 41Z M12 6 Q18 3 22 8 Q16 12 12 10Z" fill="#bfae7c"/>
      <path d="M34 12 Q42 10 46 16 Q40 20 34 18Z" fill="#8d9858"/>
      <path d="M113 17 L139 -1 L139 48 L114 48Z" fill="#cfd9df"/>
      <path d="M113 17 L139 -1 L139 5 L114 22Z" fill="#b4c1c9"/>
      <path d="M118 26 h3 v18 h-3z M125 23 h3 v21 h-3z M132 20 h3 v24 h-3z" fill="#a9b7c0"/>
      <rect x="91" y="24" width="23" height="9" fill="#e6dfd2"/>
    </g>
    <rect x="1.5" y="0" width="8" height="46" fill="#1b2a2a" filter="url(#cb0)"/>
    <path d="M11 44 L26 31 L108 30.5 L122 45Z" fill="#22323a"/><path d="M16 43 L29 33 L58 32.5 L56 43Z" fill="#3d5257" opacity=".8"/>
    <path d="M60 33 L106 32.5 L119 44 L64 44Z" fill="#7f959b" opacity=".75"/>
    <path d="M82 33 L104 33 L114 43 L90 43Z" fill="#a9bcc2" opacity=".7"/>
    <path d="M26 31.5 L60 30 L60 31.5 L28 33Z" fill="#c4242c"/>
    <ellipse cx="67" cy="38.5" rx="8" ry="2.2" fill="#10191c"/>
    <rect x="0" y="43" width="139" height="26" fill="#d3242c"/>
    <path d="M0 43 L30 43 L16 69 L0 69Z" fill="#dd2029"/>
    <path d="M0 62 L18 62 L16 69 L0 69Z" fill="#e8555c"/>
    <path d="M30 43 Q68 40 106 44 L120 69 L16 69Z" fill="url(#hoodw)"/>
    <path d="M106 44 L139 47 L139 69 L120 69Z" fill="#cf6a72"/>
    <path d="M106 44 L139 47 L139 56 L112 52Z" fill="#d9a9ae"/>
    <path d="M118 64 L139 64 L139 69 L120 69Z" fill="#d8242c"/>
    <path d="M65 43 L72.5 43 L72 69 L65 69Z" fill="#cf2430"/>
    <rect x="0" y="68.5" width="139" height="40" fill="#18272b"/>
    <rect x="0" y="70" width="139" height="38" fill="url(#hex)"/>
    <g filter="url(#cb0)">
      <ellipse cx="0.5" cy="88.5" rx="8" ry="14" fill="#c8d4d9"/>
      <ellipse cx="0" cy="88" rx="4" ry="8" fill="#8fa1a8"/>
      <ellipse cx="138" cy="88.5" rx="8" ry="14" fill="#d6e0e4"/>
      <ellipse cx="139" cy="89" rx="4" ry="8" fill="#9fb0b6"/>
      <path d="M50 86 Q53 81 60 81 Q64 79 68 82 Q76 81 82 83 Q88 80 92 82 Q88 84 84 85 Q80 90 74 90 L70 95 L66 92 Q62 92 60 88 Q56 84 50 86Z" fill="none" stroke="#b9c7cc" stroke-width="1.3"/>
      <path d="M60 84 Q68 84 76 86 Q72 90 68 92" fill="none" stroke="#93a5ab" stroke-width="1"/>
      <rect x="66" y="86" width="5" height="2.5" fill="#c0344a"/>
    </g>
    <rect x="0" y="108" width="139" height="50" fill="#d0222c"/>
    <path d="M0 108 L139 108 L139 122 Q120 128 100 124 L40 124 Q18 128 0 122Z" fill="#d8222b"/>
    <path d="M0 124 Q20 128 22 126 L22 146 L0 150Z" fill="#c01f2a"/>
    <path d="M117 126 Q122 128 139 122 L139 150 L117 146Z" fill="#c4202b"/>
    <path d="M0 142 L22 144 L22 148 L0 147Z M117 144 L139 142 L139 147 L117 148Z" fill="#e0303a"/>
    <path d="M19 109 L119 109 L124 128 L117 152 L108 158 L30 158 L21 152 L14 128Z" fill="url(#bumpw)"/>
    <path d="M28 136 L110 136 L112 142 L108 154 L30 154 L26 142Z" fill="#dfe7ea"/>
    <path d="M27 135 Q68 138 111 135" fill="none" stroke="#a9b7bd" stroke-width="1.2"/>
    <path d="M65 108 L72.5 108 L72 139 L65.5 139Z" fill="#cf2430"/>
    <path d="M65.3 128 h6.9 v11 h-6.7z" fill="#a51d28"/>
    <rect x="0" y="156" width="139" height="37" fill="#1a2a2f"/>
    <path d="M0 156 L22 152 L30 158 L108 158 L117 152 L139 156 L139 160 L0 160Z" fill="#16242a"/>
    <path d="M0 166 L21 168 L21 172 L0 170.5Z M115 169 L139 165 L139 169.5 L115 173Z" fill="#d0222b"/>
    <path d="M20 168 L32 169 L32 175 L20 173.5Z M105 169.5 L115 168 L115 173 L105 175Z" fill="#d9e1e4"/>
    <rect x="31" y="139.5" width="75.5" height="38" rx="2.5" fill="#17242a"/>
    <rect x="34" y="142.5" width="70" height="31" rx="1" fill="#b7c5cb"/>
    <path d="M34 142.5 h70 v4 h-70z" fill="#c3cfd4"/>
    <rect x="0" y="178" width="139" height="15" fill="#1b2c32"/>
    <circle cx="77" cy="190.5" r="3" fill="#16242a"/>
    <rect x="0" y="192.8" width="139" height="16" fill="#f7f7f7"/>
    <circle cx="77" cy="191" r="2.6" fill="#1d2c31"/>
    <circle cx="61.1" cy="189.9" r="4.2" fill="#0b98f0"/>
    <text x="69.3" y="203.6" text-anchor="middle" font-family="Liberation Sans, sans-serif" font-size="7.6" fill="#333" textLength="113" lengthAdjust="spacingAndGlyphs">shutterstock.com · 1170193870</text>
  </svg>
</div>
  <div class="t lbl" id="t_vl0" style="left:1184px;top:283px;letter-spacing:-.35px">Fuel</div>
  <div class="t val" id="t_vv0" style="right:443px;top:283px;letter-spacing:-.2px">Gasoline</div>
  <div class="hr" style="left:1184px;top:318px;width:293px"></div>
  <div class="t lbl" id="t_vl1" style="left:1184px;top:340px">Trim</div>
  <div class="t val" id="t_vv1" style="right:443px;top:340px;letter-spacing:-.5px">1.6 MT</div>
  <div class="hr" style="left:1184px;top:375px;width:293px"></div>
  <div class="t lbl" id="t_vl2" style="left:1184px;top:397px;letter-spacing:-.12px">Transmission</div>
  <div class="t val" id="t_vv2" style="right:443px;top:397px;letter-spacing:.15px">Manual</div>
  <div class="hr" style="left:1184px;top:432px;width:293px"></div>
  <div class="t lbl" id="t_vl3" style="left:1184px;top:454px;letter-spacing:.15px">Number of seats</div>
  <div class="t val" id="t_vv3" style="right:443px;top:454px">5</div>
  <div class="hr" style="left:1184px;top:489px;width:293px"></div>
  <div class="t lbl" id="t_vl4" style="left:1184px;top:511px;letter-spacing:.08px">Serial number</div>
  <div class="t val" id="t_vv4" style="right:443px;top:511px;letter-spacing:-.15px">56783290</div>
  <div class="hr" style="left:1184px;top:546px;width:293px"></div>
  <div class="t lbl" id="t_vl5" style="left:1184px;top:568px;letter-spacing:-.3px">Year</div>
  <div class="t val" id="t_vv5" style="right:443px;top:568px;letter-spacing:-.27px">2023</div>
  <div class="hr" style="left:1184px;top:603px;width:293px"></div>
  <div class="abs pill" style="left:1184px;top:620px;width:83px;height:30px;border:1px solid #0c9af0;border-radius:15px"></div>
  <div class="t" id="t_alfa" style="left:1195px;top:629.8px;font-size:13px;color:#1d93ee;font-size:12.5px;letter-spacing:-.42px">Alfa Romeo</div>
  <div class="abs" style="left:1284px;top:621px;width:49px;height:28px;border-radius:14px;background:#9e9e9e"></div>
  <svg class="abs" style="left:1377px;top:625px" width="20" height="20" viewBox="0 0 20 20"><path fill="#38b0ff" d="M9.049 2.927c.3-.921 1.603-.921 1.902 0l1.07 3.292a1 1 0 00.95.69h3.462c.969 0 1.371 1.24.588 1.81l-2.8 2.034a1 1 0 00-.364 1.118l1.07 3.292c.3.921-.755 1.688-1.54 1.118l-2.8-2.034a1 1 0 00-1.175 0l-2.8 2.034c-.784.57-1.838-.197-1.539-1.118l1.07-3.292a1 1 0 00-.364-1.118L2.98 8.72c-.783-.57-.38-1.81.588-1.81h3.461a1 1 0 00.951-.69l1.07-3.292z"/></svg>
  <svg class="abs" style="left:1397px;top:625px" width="20" height="20" viewBox="0 0 20 20"><path fill="#38b0ff" d="M9.049 2.927c.3-.921 1.603-.921 1.902 0l1.07 3.292a1 1 0 00.95.69h3.462c.969 0 1.371 1.24.588 1.81l-2.8 2.034a1 1 0 00-.364 1.118l1.07 3.292c.3.921-.755 1.688-1.54 1.118l-2.8-2.034a1 1 0 00-1.175 0l-2.8 2.034c-.784.57-1.838-.197-1.539-1.118l1.07-3.292a1 1 0 00-.364-1.118L2.98 8.72c-.783-.57-.38-1.81.588-1.81h3.461a1 1 0 00.951-.69l1.07-3.292z"/></svg>
  <svg class="abs" style="left:1417px;top:625px" width="20" height="20" viewBox="0 0 20 20"><path fill="#38b0ff" d="M9.049 2.927c.3-.921 1.603-.921 1.902 0l1.07 3.292a1 1 0 00.95.69h3.462c.969 0 1.371 1.24.588 1.81l-2.8 2.034a1 1 0 00-.364 1.118l1.07 3.292c.3.921-.755 1.688-1.54 1.118l-2.8-2.034a1 1 0 00-1.175 0l-2.8 2.034c-.784.57-1.838-.197-1.539-1.118l1.07-3.292a1 1 0 00-.364-1.118L2.98 8.72c-.783-.57-.38-1.81.588-1.81h3.461a1 1 0 00.951-.69l1.07-3.292z"/></svg>
  <svg class="abs" style="left:1437px;top:625px" width="20" height="20" viewBox="0 0 20 20"><path fill="#38b0ff" d="M9.049 2.927c.3-.921 1.603-.921 1.902 0l1.07 3.292a1 1 0 00.95.69h3.462c.969 0 1.371 1.24.588 1.81l-2.8 2.034a1 1 0 00-.364 1.118l1.07 3.292c.3.921-.755 1.688-1.54 1.118l-2.8-2.034a1 1 0 00-1.175 0l-2.8 2.034c-.784.57-1.838-.197-1.539-1.118l1.07-3.292a1 1 0 00-.364-1.118L2.98 8.72c-.783-.57-.38-1.81.588-1.81h3.461a1 1 0 00.951-.69l1.07-3.292z"/></svg>
  <svg class="abs" style="left:1457px;top:625px" width="20" height="20" viewBox="0 0 20 20"><path fill="#d1d5db" d="M9.049 2.927c.3-.921 1.603-.921 1.902 0l1.07 3.292a1 1 0 00.95.69h3.462c.969 0 1.371 1.24.588 1.81l-2.8 2.034a1 1 0 00-.364 1.118l1.07 3.292c.3.921-.755 1.688-1.54 1.118l-2.8-2.034a1 1 0 00-1.175 0l-2.8 2.034c-.784.57-1.838-.197-1.539-1.118l1.07-3.292a1 1 0 00-.364-1.118L2.98 8.72c-.783-.57-.38-1.81.588-1.81h3.461a1 1 0 00.951-.69l1.07-3.292z"/></svg>

  <div class="card" id="loc" style="left:421px;top:714px;width:544px;height:500px"></div>
  <div class="card" id="price" style="left:981px;top:714px;width:544px;height:500px"></div>

  <!-- LOCATIONS CONTENT -->
  <div class="t h" id="t_loc" style="left:445px;top:735px;letter-spacing:-.42px">Locations</div>
  <div class="t val" id="t_addr1" style="left:445px;top:794.6px;letter-spacing:.11px">12 borj elkiffan- Ksar El Hirane- Laghouat</div>
  <div class="hr" style="left:445px;top:830px;width:496px"></div>
  <div class="t val" id="t_addr2" style="left:445px;top:851.6px">zalamit- Ghassira- Batna</div>
  <div class="hr" style="left:445px;top:887px;width:496px"></div>
<div class="abs" id="map" style="left:445px;top:904px;width:496px;height:200px;background:#f2efe9;overflow:hidden">
  <svg width="496" height="128" viewBox="0 0 496 128" style="position:absolute;left:0;top:0">
    <defs><filter id="mb" x="-5%" y="-5%" width="110%" height="110%"><feGaussianBlur stdDeviation=".75"/></filter>
    <filter id="ms" x="-50%" y="-50%" width="200%" height="200%"><feGaussianBlur stdDeviation="1.6"/></filter>
    <linearGradient id="mk" x1="0" y1="0" x2="0" y2="1"><stop offset="0" stop-color="#3b92d4"/><stop offset="1" stop-color="#1f6fb6"/></linearGradient></defs>
    <g filter="url(#mb)" fill="none" stroke-linejoin="round" stroke-linecap="round">
      <polyline points="129.7,0.7 133.1,5.5 138.5,10.9 141.9,17.7 148,23.1 153.4,29.9 163.6,31.9 175.1,27.1 187.3,23.8 185.9,20.4 190,12.2 194.7,4.1 198.1,-1" stroke="#d3c1d7" stroke-width="2"/>
      <polyline points="218.4,-1 219.8,4.1 230.6,4.8 232,9.5 237.4,12.2 238.7,20.4 236.7,28.5 242.8,42 246.9,52.9 249.6,59.6 247,66 250,80 253,92 256.6,94.3 273.9,98.3 295.1,104.9 313.7,115.5 327,129" stroke="#d3c1d7" stroke-width="2"/>
      <polyline points="422.6,-1 430.6,9.3 435.9,19.9 451.8,25.2 458.5,38.5 470.4,43.8 481,50.4 470.4,58.4 446.5,66.4 451.8,75.7 470.4,83.6 497,94.3" stroke="#d3c1d7" stroke-width="2"/>
      <polyline points="0.4,88 3,97 5.2,104.3 3.1,113.8 7.2,129" stroke="#d3c1d7" stroke-width="2"/>
      <polyline points="94.5,12.5 88.4,15 76.2,19.7 68.1,25.1 61.3,29.2 53.2,35.3 49,40" stroke="#f6ab9c" stroke-width="1.7"/>
      <polyline points="235.4,12.2 227.9,23.1 218.4,36.6 209,50.2 206.9,63.7 200.8,75.9 194.1,85.4 199.5,92.8 197.4,98.9 194.1,103 196.8,105" stroke="#f6ab9c" stroke-width="1.7"/>
      <polyline points="222.5,110.4 218.4,115.2 214.4,121.3 209,122.6" stroke="#f6ab9c" stroke-width="1.7"/>
      <polyline points="203.5,112.5 206.2,117.9 206.9,129" stroke="#e58fb0" stroke-width="2.2"/>
      <circle cx="57" cy="31.9" r="3.3" fill="#f8f6f2" stroke="#8a8a8a" stroke-width="1.3"/>
      <circle cx="310.5" cy="23.9" r="3.3" fill="#f8f6f2" stroke="#8a8a8a" stroke-width="1.3"/>
      <path d="M496 28 Q489 36 495 46" stroke="#8f6f9b" stroke-width="2.2"/>
      <g font-family="Liberation Sans, sans-serif" stroke="#f6f4ef" stroke-width="3.2" paint-order="stroke">
        <text x="32" y="54.2" font-size="19" fill="#777" textLength="50" lengthAdjust="spacingAndGlyphs">Aflou</text>
        <text x="269.9" y="47.3" font-size="19.5" fill="#6c6c6c" textLength="82" lengthAdjust="spacingAndGlyphs">Messaad</text>
        <text x="110" y="119.9" font-size="21.5" font-style="italic" fill="#9a7ba4" textLength="92" lengthAdjust="spacingAndGlyphs">Laghouat</text>
      </g>
      <g font-family="Liberation Sans, sans-serif" stroke-width=".2">
        <text x="32" y="54.2" font-size="19" fill="#777" stroke="#777" textLength="50" lengthAdjust="spacingAndGlyphs">Aflou</text>
        <text x="269.9" y="47.3" font-size="19.5" fill="#6c6c6c" stroke="#6c6c6c" textLength="82" lengthAdjust="spacingAndGlyphs">Messaad</text>
        <text x="110" y="119.9" font-size="21.5" font-style="italic" fill="#9a7ba4" stroke="#9a7ba4" textLength="92" lengthAdjust="spacingAndGlyphs">Laghouat</text>
      </g>
    </g>
    <ellipse cx="258" cy="95" rx="9" ry="4.5" fill="#000" opacity=".45" filter="url(#ms)" transform="rotate(-38 258 95)"/>
    <path d="M249 102.6 C246.2 94 237.4 85 237.4 76 A11.6 11.6 0 0 1 260.6 76 C260.6 85 251.8 94 249 102.6Z" fill="url(#mk)" stroke="#1b5f9e" stroke-width="1"/>
    <circle cx="249" cy="75.8" r="4.2" fill="#fff"/>
  </svg>
  <div class="abs" style="left:10px;top:10px;width:34px;height:64px;border:2px solid rgba(0,0,0,.22);border-radius:5px;background:#fff;background-clip:padding-box">
    <div class="abs" style="left:0;top:29.5px;width:30px;height:1px;background:#ccc"></div>
    <div class="abs" style="left:9px;top:15px;width:13px;height:2.2px;background:#000"></div>
    <div class="abs" style="left:14.4px;top:9.6px;width:2.2px;height:13px;background:#000"></div>
    <div class="abs" style="left:10px;top:43.5px;width:12px;height:2.2px;background:#000"></div>
  </div>
</div>

  <!-- PRICING CONTENT -->
  <div class="t h" id="t_pricing" style="left:1005px;top:735px;letter-spacing:-.18px">Pricing</div>
  <div class="t lbl" id="t_dur" style="left:1021px;top:785px;color:#0f172a;letter-spacing:.27px">Duration</div>
  <div class="t lbl" id="t_price" style="left:1364px;top:785px;color:#0f172a;letter-spacing:-.3px">Price</div>
  <div class="hr" style="left:1005px;top:810px;width:244px"></div>
  <div class="hr" style="left:1257px;top:810px;width:244px"></div>
  <div class="abs" style="left:1005px;top:819px;width:496px;height:81px;border:1px solid #bae6fd;border-bottom:none;border-radius:11px 11px 0 0"></div>
  <div class="t pr" id="t_pa0" style="left:1042px;top:853px;letter-spacing:-.4px">1day</div>
  <div class="t pr" id="t_pu0" style="left:1082.5px;top:853px">_</div>
  <div class="t pr" id="t_pb0" style="left:1101px;top:853px;letter-spacing:-.2px">3days</div>
  <div class="t pr" id="t_pp0" style="left:1295px;top:853px;letter-spacing:-.25px">5500</div>
  <svg class="abs" style="left:1343px;top:849px" width="22" height="22" viewBox="-11 -11 22 22"><circle r="8.9" fill="none" stroke="#0b2e55" stroke-width="2"/><text x="0" y="5" text-anchor="middle" font-family="Liberation Sans, sans-serif" font-weight="700" font-size="14" fill="#0b2e55">$</text></svg>
  <svg class="abs" style="left:1449px;top:855.6px" width="14" height="10" viewBox="0 0 14 10"><path d="M1.8 2.2 L7 7.2 L12.2 2.2" fill="none" stroke="#1e88e5" stroke-width="1.6" stroke-linecap="round" stroke-linejoin="round"/></svg>
  <div class="abs" style="left:1005px;top:908px;width:496px;height:81px;border:1px solid #bae6fd;border-bottom:none;border-radius:11px 11px 0 0"></div>
  <div class="t pr" id="t_pa1" style="left:1042px;top:942px;letter-spacing:-.1px">4days</div>
  <div class="t pr" id="t_pu1" style="left:1091px;top:942px">_</div>
  <div class="t pr" id="t_pb1" style="left:1109px;top:942px;letter-spacing:-.15px">7days</div>
  <div class="t pr" id="t_pp1" style="left:1295px;top:942px;letter-spacing:-.25px">4500</div>
  <svg class="abs" style="left:1343px;top:938px" width="22" height="22" viewBox="-11 -11 22 22"><circle r="8.9" fill="none" stroke="#0b2e55" stroke-width="2"/><text x="0" y="5" text-anchor="middle" font-family="Liberation Sans, sans-serif" font-weight="700" font-size="14" fill="#0b2e55">$</text></svg>
  <svg class="abs" style="left:1449px;top:944.6px" width="14" height="10" viewBox="0 0 14 10"><path d="M1.8 2.2 L7 7.2 L12.2 2.2" fill="none" stroke="#1e88e5" stroke-width="1.6" stroke-linecap="round" stroke-linejoin="round"/></svg>
  <div class="abs" style="left:1005px;top:997px;width:496px;height:81px;border:1px solid #bae6fd;border-bottom:none;border-radius:11px 11px 0 0"></div>
  <div class="t pr" id="t_pa2" style="left:1042px;top:1031px">8days</div>
  <div class="t pr" id="t_pu2" style="left:1091px;top:1031px">_</div>
  <div class="t pr" id="t_pb2" style="left:1109px;top:1031px">15days</div>
  <div class="t pr" id="t_pp2" style="left:1295px;top:1031px;letter-spacing:-.25px">4000</div>
  <svg class="abs" style="left:1343px;top:1027px" width="22" height="22" viewBox="-11 -11 22 22"><circle r="8.9" fill="none" stroke="#0b2e55" stroke-width="2"/><text x="0" y="5" text-anchor="middle" font-family="Liberation Sans, sans-serif" font-weight="700" font-size="14" fill="#0b2e55">$</text></svg>
  <svg class="abs" style="left:1449px;top:1033.6px" width="14" height="10" viewBox="0 0 14 10"><path d="M1.8 2.2 L7 7.2 L12.2 2.2" fill="none" stroke="#1e88e5" stroke-width="1.6" stroke-linecap="round" stroke-linejoin="round"/></svg>
</div></div>
<div id="sb"><div class="thumb"></div>
<svg class="abs" style="left:3px;top:3.5px" width="9" height="7" viewBox="0 0 9 7"><path d="M1 5.6 L4.5 2 L8 5.6" fill="none" stroke="#505050" stroke-width="2"/></svg>
<svg class="abs" style="left:3px;top:920.5px" width="9" height="7" viewBox="0 0 9 7"><path d="M1 1.4 L4.5 5 L8 1.4" fill="none" stroke="#505050" stroke-width="2"/></svg>
</div>
</div>
</body>
</html>
